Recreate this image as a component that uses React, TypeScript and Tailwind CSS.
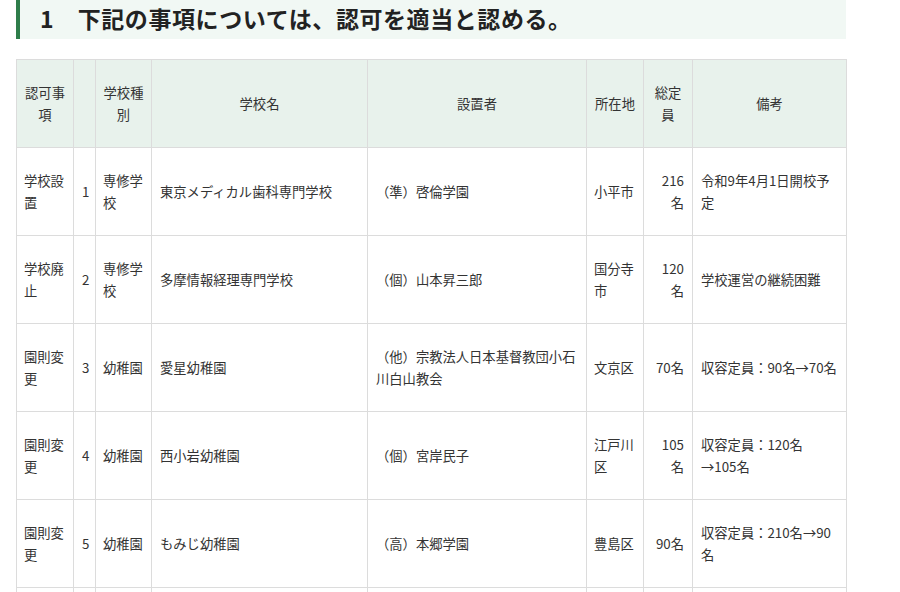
import React from 'react';

type Row = {
  kind: string;
  no: string;
  type: string;
  name: string;
  founder: string;
  place: string;
  cap: string;
  note: string;
};

const rows: Row[] = [
  { kind: '学校設置', no: '1', type: '専修学校', name: '東京メディカル歯科専門学校', founder: '（準）啓倫学園', place: '小平市', cap: '216名', note: '令和9年4月1日開校予定' },
  { kind: '学校廃止', no: '2', type: '専修学校', name: '多摩情報経理専門学校', founder: '（個）山本昇三郎', place: '国分寺市', cap: '120名', note: '学校運営の継続困難' },
  { kind: '園則変更', no: '3', type: '幼稚園', name: '愛星幼稚園', founder: '（他）宗教法人日本基督教団小石川白山教会', place: '文京区', cap: '70名', note: '収容定員：90名→70名' },
  { kind: '園則変更', no: '4', type: '幼稚園', name: '西小岩幼稚園', founder: '（個）宮岸民子', place: '江戸川区', cap: '105名', note: '収容定員：120名→105名' },
  { kind: '園則変更', no: '5', type: '幼稚園', name: 'もみじ幼稚園', founder: '（高）本郷学園', place: '豊島区', cap: '90名', note: '収容定員：210名→90名' },
];

const th = 'border border-[#dcdcdc] bg-[#e8f2ec] px-2 font-normal text-center align-middle';
const td = 'border border-[#dcdcdc] px-2 align-middle';

export default function App() {
  return (
    <div className="min-h-[592px] bg-white px-4 text-[#333] font-['Noto_Sans_CJK_JP',sans-serif]">
      <h2 className="flex h-[39px] w-[830px] items-center border-l-4 border-[#2e7d4a] bg-[#f1f8f4] pb-[3px] pl-5 text-[23px] font-bold tracking-[0.025em] text-[#222]">
        1　下記の事項については、認可を適当と認める。
      </h2>

      <table className="mt-5 w-[830px] table-fixed border-collapse text-[13.3px] leading-[1.6]">
        <colgroup>
          <col className="w-[57px]" />
          <col className="w-[22px]" />
          <col className="w-[56px]" />
          <col className="w-[216px]" />
          <col className="w-[219px]" />
          <col className="w-[57px]" />
          <col className="w-[49px]" />
          <col className="w-[154px]" />
        </colgroup>
        <thead>
          <tr className="h-[88px]">
            <th className={`${th} px-[7px]`}>認可事項</th>
            <th className={th}></th>
            <th className={`${th} px-[7px]`}>学校種別</th>
            <th className={th}>学校名</th>
            <th className={th}>設置者</th>
            <th className={`${th} px-[7px]`}>所在地</th>
            <th className={th}>総定員</th>
            <th className={th}>備考</th>
          </tr>
        </thead>
        <tbody>
          {rows.map((r) => (
            <tr key={r.no} className="h-[88px]">
              <td className={`${td} px-[7px]`}>{r.kind}</td>
              <td className={`${td} px-1 text-center`}>{r.no}</td>
              <td className={`${td} px-[7px]`}>{r.type}</td>
              <td className={td}>{r.name}</td>
              <td className={td}>{r.founder}</td>
              <td className={`${td} px-[7px]`}>{r.place}</td>
              <td className={`${td} text-right`}>{r.cap}</td>
              <td className={td}>{r.note}</td>
            </tr>
          ))}
          <tr className="h-[88px]">
            <td className={td}></td>
            <td className={td}></td>
            <td className={td}></td>
            <td className={td}></td>
            <td className={td}></td>
            <td className={td}></td>
            <td className={td}></td>
            <td className={td}></td>
          </tr>
        </tbody>
      </table>
    </div>
  );
}
